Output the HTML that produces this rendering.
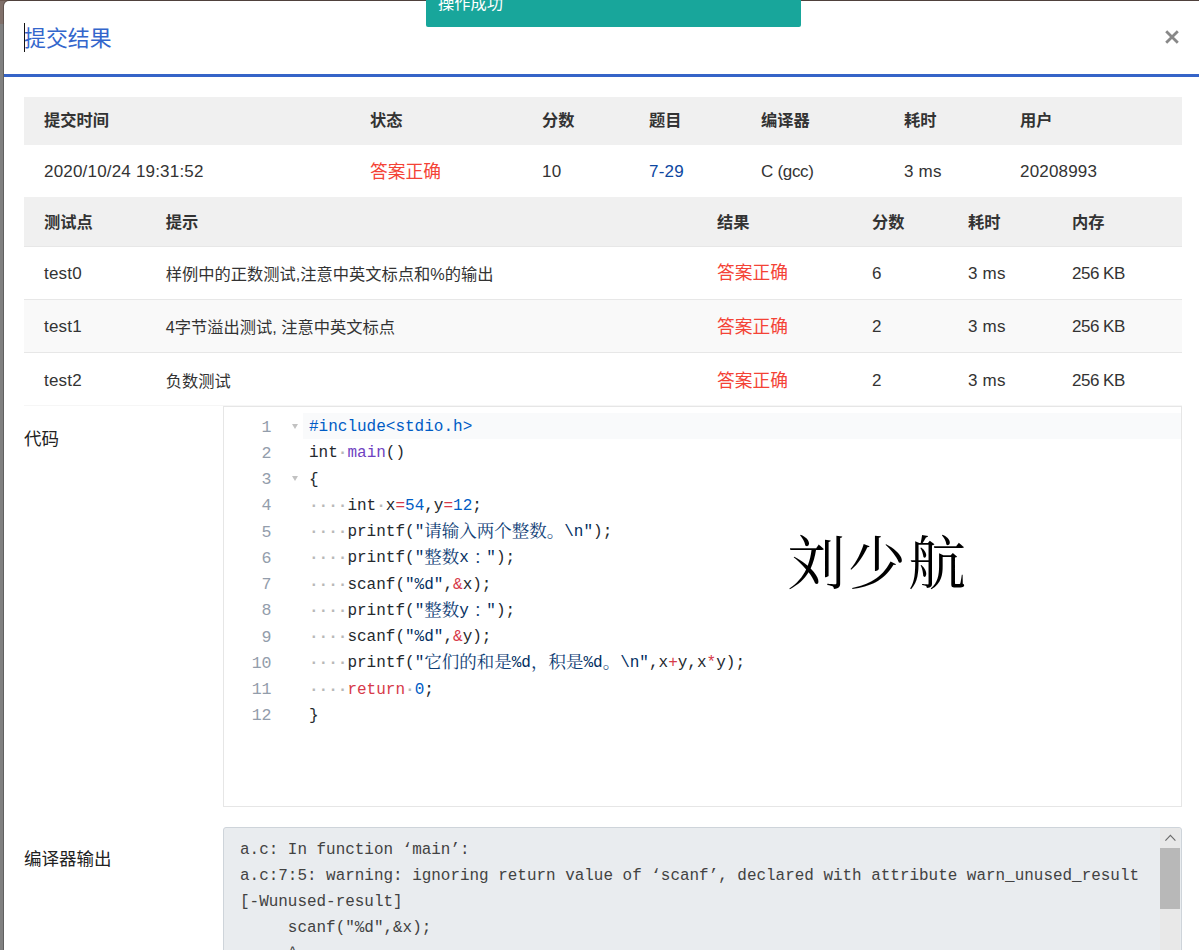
<!DOCTYPE html>
<html lang="zh-CN">
<head>
<meta charset="utf-8">
<title>提交结果</title>
<style>
html,body{margin:0;padding:0;}
body{width:1199px;height:950px;overflow:hidden;position:relative;background:#808080;
  font-family:"Liberation Sans","Noto Sans CJK SC",sans-serif;font-size:16.25px;color:#333;}
.abs{position:absolute;}
#bgtop{left:0;top:0;width:1199px;height:24px;background:#80706a;}
#bgtopline{left:0;top:0;width:1199px;height:1.4px;background:#6a5750;}
#modal{left:4px;top:1px;width:1300px;height:1100px;background:#fff;border-radius:5px;box-shadow:0 0 0 1px rgba(0,0,0,.25);}
#title{left:24px;top:23px;font-size:21.9px;line-height:32px;color:#3366cc;white-space:nowrap;}
#caret{left:24px;top:23px;width:1px;height:29px;background:#111;}
#hline{left:4px;top:74px;width:1195px;height:3px;background:#3564c8;}
#close{left:1164px;top:29px;width:16px;height:16px;}
#toast{left:426px;top:0;width:375px;height:27px;background:#18a69b;overflow:hidden;border-radius:0 0 2px 2px;}
#toast span{position:absolute;left:12px;top:-9px;color:#fff;font-size:16.25px;line-height:24px;white-space:nowrap;}
.row{left:24px;width:1158px;}
.hd{background:#f0f0f0;}
.alt{background:#f9f9f9;}
.bt{border-top:1px solid #e7e7e7;box-sizing:border-box;}
.c{position:absolute;white-space:nowrap;line-height:24px;}
.b{font-weight:bold;color:#333;}
.red{color:#f44336;font-size:17.75px;}
.lnk{color:#0d47a1;}
.lat{font-size:17px;letter-spacing:0.19px;}
.lbl{left:24px;font-size:17.5px;line-height:24px;white-space:nowrap;color:#222;}
#editor{left:223px;top:406px;width:959px;height:401px;box-sizing:border-box;border:1px solid #e6e6e6;background:#fff;}
#active{left:303px;top:413px;width:878px;height:26px;background:#f9fafb;}
.ln{position:absolute;left:230px;width:41px;text-align:right;color:#939dab;font-family:"Liberation Mono",monospace;font-size:16.6px;letter-spacing:-0.36px;margin-top:0.6px;line-height:26px;height:26px;}
.cl{position:absolute;left:309px;white-space:pre;font-family:"Liberation Mono","Noto Serif CJK SC",monospace;font-size:16px;line-height:26px;height:26px;color:#24292e;}
.cl .zh{font-family:"Noto Serif CJK SC",serif;font-size:17.5px;line-height:20px;position:relative;top:1.3px;color:#0e3d75;}
.cl .zc{left:5px;}
.k{color:#d73a49;}.n{color:#005cc5;}.f{color:#6f42c1;}.s{color:#032f62;}.ws{color:#b8b8b8;font-weight:bold;}
.fold{position:absolute;left:292px;width:0;height:0;border-left:3.6px solid transparent;border-right:3.6px solid transparent;border-top:5.4px solid #c2c2c2;}
#wm{left:787.5px;top:523.5px;letter-spacing:2.2px;font-family:"Noto Serif CJK SC","Liberation Serif",serif;font-size:58px;line-height:70px;color:#000;white-space:nowrap;font-weight:400;}
#pre{left:223px;top:827px;width:959px;height:140px;box-sizing:border-box;background:#e9ecef;border:1px solid #ced4da;border-radius:3px;}
.pl{position:absolute;left:240px;white-space:pre;font-family:"Liberation Mono",monospace;font-size:15.95px;line-height:26px;height:26px;color:#424242;}
#sbtrack{left:1160px;top:828px;width:20px;height:122px;background:#e8e8e8;}
#sbthumb{left:1160px;top:848px;width:20px;height:61px;background:#b8b8b8;}
</style>
</head>
<body>
<div class="abs" id="bgtop"></div>
<div class="abs" id="bgtopline"></div>
<div class="abs" id="modal"></div>

<div class="abs" id="title">提交结果</div>
<div class="abs" id="caret"></div>
<svg class="abs" id="close" viewBox="0 0 16 16"><path d="M2.2 2.2 L13.8 13.8 M13.8 2.2 L2.2 13.8" stroke="#888" stroke-width="2.8" fill="none"/></svg>
<div class="abs" id="hline"></div>
<div class="abs" id="toast"><span>操作成功</span></div>

<!-- table 1 -->
<div class="abs row hd" style="top:97px;height:48px;"></div>
<div class="c b" style="left:44px;top:108.3px;">提交时间</div>
<div class="c b" style="left:370px;top:108.3px;">状态</div>
<div class="c b" style="left:542px;top:108.3px;">分数</div>
<div class="c b" style="left:649px;top:108.3px;">题目</div>
<div class="c b" style="left:761px;top:108.3px;">编译器</div>
<div class="c b" style="left:904px;top:108.3px;">耗时</div>
<div class="c b" style="left:1020px;top:108.3px;">用户</div>

<div class="c lat" style="left:44px;top:160px;">2020/10/24 19:31:52</div>
<div class="c red" style="left:370px;top:160px;">答案正确</div>
<div class="c lat" style="left:542px;top:160px;">10</div>
<div class="c lat lnk" style="left:649px;top:160px;">7-29</div>
<div class="c lat" style="left:761px;top:160px;letter-spacing:-0.3px;">C (gcc)</div>
<div class="c lat" style="left:904px;top:160px;">3 ms</div>
<div class="c lat" style="left:1020px;top:160px;">20208993</div>

<!-- table 2 -->
<div class="abs row hd" style="top:197px;height:48.6px;"></div>
<div class="c b" style="left:44px;top:210.2px;">测试点</div>
<div class="c b" style="left:165.8px;top:210.2px;">提示</div>
<div class="c b" style="left:717px;top:210.2px;">结果</div>
<div class="c b" style="left:872px;top:210.2px;">分数</div>
<div class="c b" style="left:968px;top:210.2px;">耗时</div>
<div class="c b" style="left:1072px;top:210.2px;">内存</div>

<div class="abs row bt" style="top:245.5px;height:53.5px;"></div>
<div class="c lat" style="left:44px;top:262px;">test0</div>
<div class="c" style="left:165.8px;top:262px;">样例中的正数测试,注意中英文标点和%的输出</div>
<div class="c red" style="left:717px;top:261.3px;">答案正确</div>
<div class="c lat" style="left:872px;top:262px;">6</div>
<div class="c lat" style="left:968px;top:262px;">3 ms</div>
<div class="c lat" style="left:1072px;top:262px;letter-spacing:-0.5px;">256 KB</div>

<div class="abs row bt alt" style="top:299px;height:53px;"></div>
<div class="c lat" style="left:44px;top:315px;">test1</div>
<div class="c" style="left:165.8px;top:315px;">4字节溢出测试, 注意中英文标点</div>
<div class="c red" style="left:717px;top:315px;">答案正确</div>
<div class="c lat" style="left:872px;top:315px;">2</div>
<div class="c lat" style="left:968px;top:315px;">3 ms</div>
<div class="c lat" style="left:1072px;top:315px;letter-spacing:-0.5px;">256 KB</div>

<div class="abs row bt" style="top:352px;height:53px;"></div>
<div class="c lat" style="left:44px;top:369px;">test2</div>
<div class="c" style="left:165.8px;top:369px;">负数测试</div>
<div class="c red" style="left:717px;top:369.3px;">答案正确</div>
<div class="c lat" style="left:872px;top:369px;">2</div>
<div class="c lat" style="left:968px;top:369px;">3 ms</div>
<div class="c lat" style="left:1072px;top:369px;letter-spacing:-0.5px;">256 KB</div>

<div class="abs" style="left:24px;top:405px;width:1158px;height:1px;background:#f6f6f6;"></div>
<!-- code -->
<div class="abs lbl" style="top:427px;">代码</div>
<div class="abs" id="editor"></div>
<div class="abs" id="active"></div>
<!--LINES-->
<div class="ln" style="top:414.0px;">1</div>
<div class="fold" style="top:423.6px;"></div>
<div class="cl" style="top:414.0px;"><span class="n">#include&lt;stdio.h&gt;</span></div>
<div class="ln" style="top:440.2px;">2</div>
<div class="cl" style="top:440.2px;">int<span class="ws">·</span><span class="f">main</span>()</div>
<div class="ln" style="top:466.5px;">3</div>
<div class="fold" style="top:476.1px;"></div>
<div class="cl" style="top:466.5px;">{</div>
<div class="ln" style="top:492.8px;">4</div>
<div class="cl" style="top:492.8px;"><span class="ws">····</span>int<span class="ws">·</span>x<span class="k">=</span><span class="n">54</span>,y<span class="k">=</span><span class="n">12</span>;</div>
<div class="ln" style="top:519.0px;">5</div>
<div class="cl" style="top:519.0px;"><span class="ws">····</span>printf(<span class="s">"<span class="zh">请输入两个整数。</span>\n"</span>);</div>
<div class="ln" style="top:545.2px;">6</div>
<div class="cl" style="top:545.2px;"><span class="ws">····</span>printf(<span class="s">"<span class="zh">整数</span>x<span class="zh zc">：</span>"</span>);</div>
<div class="ln" style="top:571.5px;">7</div>
<div class="cl" style="top:571.5px;"><span class="ws">····</span>scanf(<span class="s">"%d"</span>,<span class="k">&amp;</span>x);</div>
<div class="ln" style="top:597.8px;">8</div>
<div class="cl" style="top:597.8px;"><span class="ws">····</span>printf(<span class="s">"<span class="zh">整数</span>y<span class="zh zc">：</span>"</span>);</div>
<div class="ln" style="top:624.0px;">9</div>
<div class="cl" style="top:624.0px;"><span class="ws">····</span>scanf(<span class="s">"%d"</span>,<span class="k">&amp;</span>y);</div>
<div class="ln" style="top:650.2px;">10</div>
<div class="cl" style="top:650.2px;"><span class="ws">····</span>printf(<span class="s">"<span class="zh">它们的和是</span>%d<span class="zh">，积是</span>%d<span class="zh">。</span>\n"</span>,x<span class="k">+</span>y,x<span class="k">*</span>y);</div>
<div class="ln" style="top:676.5px;">11</div>
<div class="cl" style="top:676.5px;"><span class="ws">····</span><span class="k">return</span><span class="ws">·</span><span class="n">0</span>;</div>
<div class="ln" style="top:702.8px;">12</div>
<div class="cl" style="top:702.8px;">}</div>
<!--/LINES-->

<div class="abs" id="wm">刘少航</div>

<!-- compiler output -->
<div class="abs lbl" style="top:847px;">编译器输出</div>
<div class="abs" id="pre"></div>
<!--PRE-->
<div class="pl" style="top:836.5px;">a.c: In function ‘main’:</div>
<div class="pl" style="top:862.7px;">a.c:7:5: warning: ignoring return value of ‘scanf’, declared with attribute warn_unused_result</div>
<div class="pl" style="top:888.9px;">[-Wunused-result]</div>
<div class="pl" style="top:915.1px;">     scanf("%d",&amp;x);</div>
<div class="pl" style="top:941.3px;">     ^~~~~~~~~~~~~~</div>
<!--/PRE-->
<div class="abs" id="sbtrack"></div>
<div class="abs" id="sbthumb"></div>
<svg class="abs" style="left:1162px;top:831px;width:17px;height:13px;" viewBox="0 0 17 13"><path d="M3.4 9.6 L8.4 4.4 L13.4 9.6" stroke="#6c6c6c" stroke-width="1.15" fill="none"/></svg>
</body>
</html>
